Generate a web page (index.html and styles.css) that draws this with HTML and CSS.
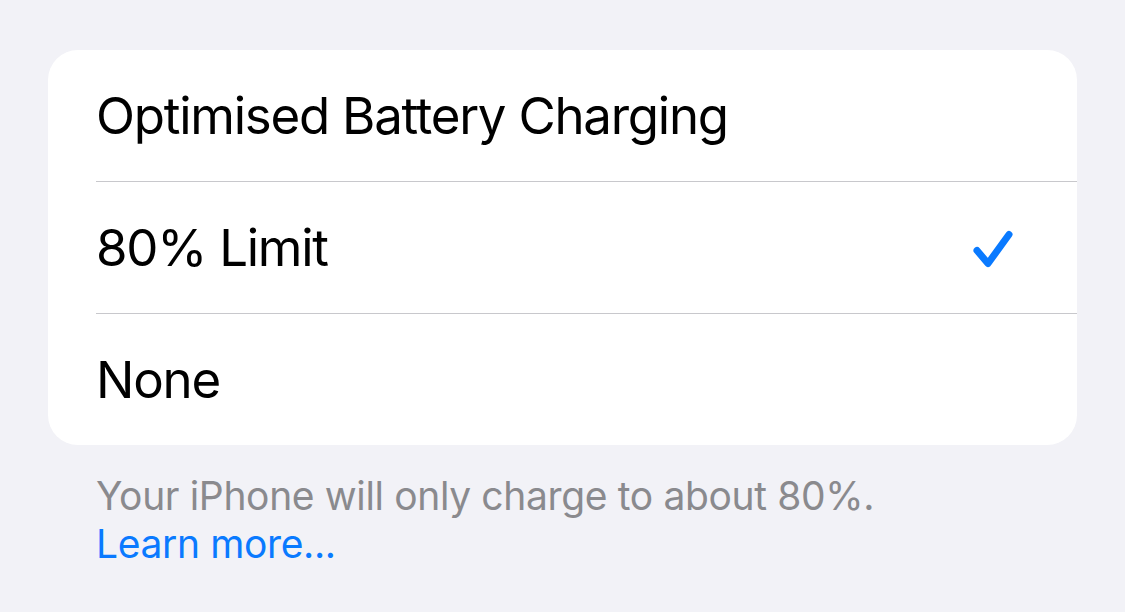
FILE: index.html
```html
<!DOCTYPE html>
<html lang="en">
<head>
    <meta charset="UTF-8">
    <meta name="viewport" content="width=device-width, initial-scale=1.0">
    <title>Charging Limit</title>
    <link rel="stylesheet" href="styles.css">
</head>
<body>
    <div class="settings">
        <div class="group">
            <div class="row">
                <span class="label">Optimised Battery Charging</span>
            </div>
            <div class="row selected">
                <span class="label">80% Limit</span>
                <svg class="check" width="50" height="48" viewBox="0 0 50 48">
                    <path d="M10 26.5 L21 39.5 L42 10.5" fill="none" stroke="#0a7aff" stroke-width="7" stroke-linecap="round" stroke-linejoin="round"/>
                </svg>
            </div>
            <div class="row">
                <span class="label">None</span>
            </div>
        </div>

        <p class="footer">
            Your iPhone will only charge to about 80%.<br>
            <a href="#" class="learn-more">Learn more...</a>
        </p>
    </div>
</body>
</html>
```

FILE: styles.css
```css
/* General Styles */
body {
    font-family: Inter, "Noto Sans", sans-serif;
    margin: 0;
    padding: 0;
    background-color: #f2f2f7;
}

.settings {
    padding: 50px 48px 0;
}

/* Grouped List */
.group {
    background-color: white;
    border-radius: 30px;
    overflow: hidden;
}

.row {
    display: flex;
    align-items: center;
    justify-content: space-between;
    height: 131px;
    margin-left: 48px;
    padding-right: 60px;
    border-bottom: 1px solid #c8c8cc;
}

.row:last-child {
    border-bottom: none;
}

.label {
    font-size: 51px;
    letter-spacing: -1.25px;
    color: #000;
}

.check {
    display: block;
}

/* Footer */
.footer {
    margin: 0;
    padding: 27px 48px 0;
    font-size: 39px;
    line-height: 48px;
    letter-spacing: -0.36px;
    color: #8a8a8e;
}

.learn-more {
    color: #0a7aff;
    text-decoration: none;
}
```
